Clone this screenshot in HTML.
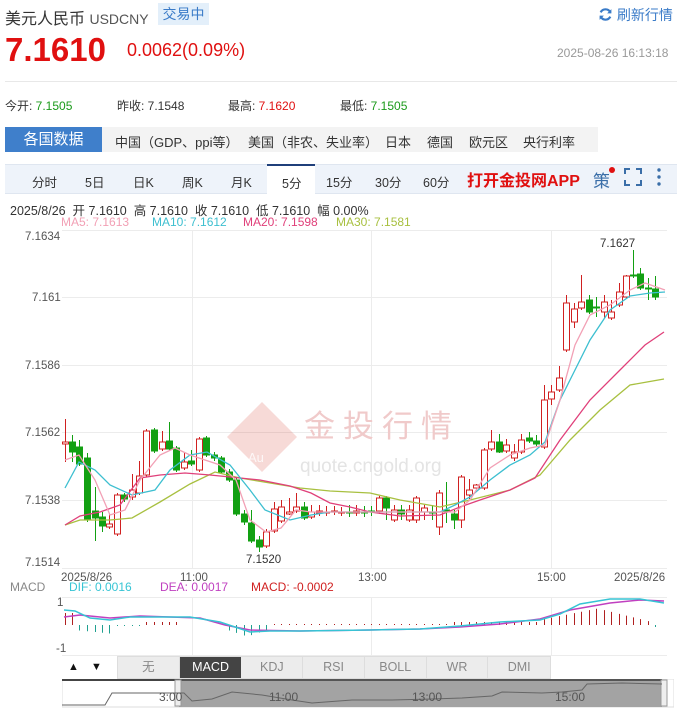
<!DOCTYPE html>
<html><head><meta charset="utf-8"><style>
*{margin:0;padding:0;box-sizing:border-box}
body{width:677px;height:710px;background:#fff;font-family:"Liberation Sans","Noto Sans CJK SC",sans-serif;position:relative;overflow:hidden;color:#333}
.a{position:absolute;white-space:nowrap}
</style></head><body>
<div class="a" style="left:5px;top:5px;font-size:16px;color:#333">美元人民币 <span style="font-size:14px;color:#555">USDCNY</span></div>
<div class="a" style="left:158px;top:3px;width:51px;height:22px;background:#e3effa;color:#3a7bc8;font-size:14px;line-height:22px;text-align:center">交易中</div>
<div class="a" style="left:598px;top:5px;font-size:14px;color:#3a7bc8"><svg width="15" height="15" viewBox="0 0 14 14" style="vertical-align:-2px"><path d="M11.5 5A5 5 0 0 0 2.5 5M2.5 9A5 5 0 0 0 11.5 9" stroke="#3a7bc8" stroke-width="2" fill="none"/><path d="M12.5 2v4h-4zM1.5 12V8h4z" fill="#3a7bc8"/></svg> 刷新行情</div>
<div class="a" style="left:5px;top:31px;font-size:33px;font-weight:bold;color:#e01010">7.1610</div>
<div class="a" style="left:127px;top:40px;font-size:18px;color:#e01010">0.0062(0.09%)</div>
<div class="a" style="left:557px;top:46px;font-size:12px;color:#999">2025-08-26 16:13:18</div>
<div class="a" style="left:5px;top:81px;width:672px;height:1px;background:#e8e8e8"></div>
<div class="a" style="left:5px;top:97px;font-size:12px;color:#333">今开: <span style="color:#1a9a1a">7.1505</span></div>
<div class="a" style="left:117px;top:97px;font-size:12px">昨收: 7.1548</div>
<div class="a" style="left:228px;top:97px;font-size:12px">最高: <span style="color:#e01010">7.1620</span></div>
<div class="a" style="left:340px;top:97px;font-size:12px">最低: <span style="color:#1a9a1a">7.1505</span></div>
<div class="a" style="left:5px;top:127px;width:97px;height:25px;background:#3f7fcb;color:#fff;font-size:15px;line-height:25px;text-align:center">各国数据</div>
<div class="a" style="left:102px;top:127px;width:496px;height:25px;background:#f3f3f3"></div>
<div class="a" style="top:132px;left:0;font-size:13px;color:#333">
<span class="a" style="left:115px">中国（GDP、ppi等）</span><span class="a" style="left:248px">美国（非农、失业率）</span><span class="a" style="left:385px">日本</span><span class="a" style="left:427px">德国</span><span class="a" style="left:469px">欧元区</span><span class="a" style="left:523px">央行利率</span></div>
<div class="a" style="left:5px;top:164px;width:672px;height:30px;background:#eef3fa;border-top:1px solid #dfe6f0;border-bottom:1px solid #dfe6f0"></div>
<div class="a" style="left:267px;top:164px;width:48px;height:31px;background:#fff;border-top:2px solid #1f3f7a"></div>
<div class="a" style="top:172px;left:0;font-size:12.5px;color:#333">
<span class="a" style="left:32px">分时</span><span class="a" style="left:85px">5日</span><span class="a" style="left:133px">日K</span><span class="a" style="left:182px">周K</span><span class="a" style="left:231px">月K</span><span class="a" style="left:282px;top:1px">5分</span><span class="a" style="left:326px">15分</span><span class="a" style="left:375px">30分</span><span class="a" style="left:423px">60分</span></div>
<div class="a" style="left:467px;top:167px;font-size:16px;font-weight:bold;color:#e01010">打开金投网APP</div>
<div class="a" style="left:593px;top:167px;font-size:17px;color:#3a6ea8">策</div>
<div class="a" style="left:609px;top:167px;width:6px;height:6px;border-radius:3px;background:#e01010"></div>
<svg class="a" style="left:624px;top:168px" width="18" height="18"><path d="M1 6V1h5M12 1h5v5M17 12v5h-5M6 17H1v-5" stroke="#3a6ea8" stroke-width="2" fill="none"/></svg>
<svg class="a" style="left:656px;top:167px" width="6" height="20"><circle cx="3" cy="3" r="1.7" fill="#3a6ea8"/><circle cx="3" cy="10" r="1.7" fill="#3a6ea8"/><circle cx="3" cy="17" r="1.7" fill="#3a6ea8"/></svg>
<div class="a" style="left:10px;top:200px;font-size:12.5px;color:#333">2025/8/26 &nbsp;开 7.1610 &nbsp;高 7.1610 &nbsp;收 7.1610 &nbsp;低 7.1610 &nbsp;幅 0.00%</div>
<div class="a" style="top:215px;left:0;font-size:12px">
<span class="a" style="left:61px;color:#f2a0b5">MA5: 7.1613</span><span class="a" style="left:152px;color:#3dbfd0">MA10: 7.1612</span><span class="a" style="left:243px;color:#e0407a">MA20: 7.1598</span><span class="a" style="left:336px;color:#a8c040">MA30: 7.1581</span></div>
<svg class="a" id="ch" style="left:0;top:0" width="677" height="710">
<g stroke="#ececec" stroke-width="1">
<line x1="62" y1="230.5" x2="667" y2="230.5"/><line x1="62" y1="297.5" x2="667" y2="297.5"/><line x1="62" y1="365.5" x2="667" y2="365.5"/><line x1="62" y1="432.5" x2="667" y2="432.5"/><line x1="62" y1="500.5" x2="667" y2="500.5"/><line x1="62" y1="568.5" x2="667" y2="568.5"/>
<line x1="192.5" y1="230" x2="192.5" y2="568"/><line x1="371.5" y1="230" x2="371.5" y2="568"/><line x1="551.5" y1="230" x2="551.5" y2="568"/>
<line x1="62" y1="597.5" x2="667" y2="597.5"/><line x1="62" y1="655.5" x2="667" y2="655.5"/>
<line x1="192.5" y1="597" x2="192.5" y2="655"/><line x1="371.5" y1="597" x2="371.5" y2="655"/><line x1="551.5" y1="597" x2="551.5" y2="655"/>
</g>
<g font-size="11.5" fill="#555" font-family="Liberation Sans,sans-serif">
<text x="25" y="240">7.1634</text><text x="32" y="301">7.161</text><text x="25" y="369">7.1586</text><text x="25" y="436">7.1562</text><text x="25" y="504">7.1538</text><text x="25" y="566">7.1514</text>
<text x="61" y="581">2025/8/26</text><text x="180" y="581">11:00</text><text x="358" y="581">13:00</text><text x="537" y="581">15:00</text><text x="614" y="581">2025/8/26</text>
<text x="246" y="563" fill="#333">7.1520</text><text x="600" y="247" fill="#333">7.1627</text>
<text x="57" y="606">1</text><text x="56" y="652">-1</text>
</g>
<g opacity="0.18" fill="#d03020"><path d="M262 402l35 35-35 35-35-35z"/></g>
<text x="304" y="437" font-size="31" fill="#f0caca" font-family="Noto Sans CJK SC,sans-serif" letter-spacing="8">金投行情</text>
<text x="300" y="472" font-size="19" fill="#e4e4e4" font-family="Liberation Sans,sans-serif">quote.cngold.org</text>
<text x="248" y="462" font-size="13" fill="#fff" opacity="0.8" font-family="Liberation Sans,sans-serif">Au</text>
<g id="cd"></g>
<g fill="none" stroke-width="1.3">
<polyline stroke="#a8c040" points="65,525 80,520 110,520 132,518 160,502 190,484 215,472 240,478 270,483 300,488 330,491 370,493 400,500 440,507 470,500 510,490 540,475 570,440 600,410 630,385 664,379"/>
<polyline stroke="#e0407a" points="65,525 80,516 100,512 120,505 140,478 160,475 185,473 210,475 240,478 260,480 290,486 311,493 330,503 350,507 370,512 400,516 440,515 460,507 480,500 510,490 535,478 560,440 590,400 620,370 645,345 664,332"/>
<polyline stroke="#3dbfd0" points="65,488 79,462 95,470 110,485 132,495 155,490 170,470 190,455 207,452 230,465 250,490 265,510 290,520 311,515 330,512 440,512 455,505 470,497 490,480 510,465 530,455 545,442 560,400 575,370 590,340 610,310 630,296 650,293 665,292"/>
<polyline stroke="#f2a0b5" points="65,460 79,455 95,480 110,515 125,510 140,480 160,455 175,448 190,455 205,460 220,465 236,480 250,520 266,532 281,528 296,510 311,512 455,512 470,500 490,468 510,455 530,448 545,445 560,400 575,345 590,315 610,305 630,290 645,283 665,290"/>
</g>
<g id="mh"></g>
<g fill="none" stroke-width="1.5">
<polyline stroke="#c040c0" points="64,617 80,615 110,618 140,616 170,617 200,618 225,625 250,630 300,631 370,630 420,629 460,627 500,624 540,619 570,610 610,603 640,600 664,601"/>
<polyline stroke="#36c4d4" points="64,610 75,611 90,618 110,620 130,617 160,617 190,617 220,622 250,632 270,631 300,631 370,630 420,629 460,626 500,622 540,620 560,614 580,604 610,599 640,599 664,603"/>
</g>
</svg>
<div class="a" style="top:580px;left:0;font-size:12px;color:#888">
<span class="a" style="left:10px">MACD</span><span class="a" style="left:69px;color:#36c4d4">DIF: 0.0016</span><span class="a" style="left:160px;color:#c040c0">DEA: 0.0017</span><span class="a" style="left:251px;color:#d02020">MACD: -0.0002</span></div>
<div class="a" style="left:62px;top:656px;width:48px;height:23px;font-size:11px;line-height:23px;color:#111"><span class="a" style="left:6px">▲</span><span class="a" style="left:29px">▼</span></div>
<div class="a" style="left:117px;top:656px;width:434px;height:23px;background:#ececec;border:1px solid #ddd;display:flex;font-size:12.5px;line-height:21px;color:#888;text-align:center">
<div style="width:62px;border-right:1px solid #ddd">无</div><div style="width:62px;background:#444;color:#fff">MACD</div><div style="width:62px;border-right:1px solid #ddd">KDJ</div><div style="width:62px;border-right:1px solid #ddd">RSI</div><div style="width:62px;border-right:1px solid #ddd">BOLL</div><div style="width:62px;border-right:1px solid #ddd">WR</div><div style="width:62px">DMI</div></div>
<svg class="a" style="left:62px;top:679px" width="612" height="29">
<rect x="0" y="0" width="612" height="28" fill="#fff" stroke="#ddd"/>
<rect x="0" y="0" width="118" height="2" fill="#444"/>
<rect x="117" y="0" width="483" height="28" fill="#a3a3a3"/>
<rect x="117" y="0" width="483" height="2" fill="#555"/>
<rect x="113" y="1" width="6" height="26" fill="#eee" stroke="#999"/><rect x="599" y="1" width="6" height="26" fill="#eee" stroke="#999"/>
<polyline fill="none" stroke="#666" points="0,26 25,26 30,26 43,26 50,14 100,14 122,14 130,22 150,20 170,13 200,16 230,21 250,24 290,21 330,21 370,20 400,19 430,17 440,13 480,14 500,13 520,11 525,5 560,4 600,5"/>
<g font-size="12" fill="#555" font-family="Liberation Sans,sans-serif"><text x="97" y="22">3:00</text><text x="207" y="22">11:00</text><text x="350" y="22">13:00</text><text x="493" y="22">15:00</text></g>
</svg>
<script>
var C=[[65,444,442,419,462],[72,442,452,435,462],[79,447,464,440,466],[87,458,520,453,522],[95,511,518,487,541],[102,517,526,512,532],[109,527,524,513,529],[117,534,495,493,536],[124,495,499,493,502],[132,497,490,474,500],[139,493,476,461,495],[146,475,431,429,477],[154,430,451,428,453],[162,449,442,431,451],[169,441,449,422,451],[176,448,470,446,472],[184,468,462,453,470],[191,461,464,450,466],[199,470,439,437,472],[206,438,455,436,457],[214,455,458,452,461],[221,458,472,456,474],[229,472,480,469,482],[236,480,514,478,516],[244,514,522,510,525],[251,523,541,510,543],[259,540,547,536,552],[266,546,532,529,548],[274,531,509,502,533],[281,521,507,500,523],[289,514,512,498,515],[296,511,507,493,513],[304,507,518,502,520],[311,517,512,505,519],[319,513,511,505,516],[326,513,512,506,516],[334,512,511,506,515],[341,513,512,507,516],[349,512,512,505,517],[356,513,511,505,516],[364,512,513,506,517],[371,511,512,506,516],[379,511,498,496,514],[386,498,508,496,520],[394,520,510,505,522],[401,510,514,505,520],[409,520,510,505,522],[416,520,498,496,523],[424,512,508,505,520],[432,512,512,505,520],[439,527,493,490,535],[446,510,510,482,523],[454,514,520,510,529],[461,520,477,475,528],[469,495,490,479,499],[476,488,485,484,490],[484,488,450,448,490],[491,449,442,430,451],[499,442,452,434,453],[506,451,445,439,453],[514,458,452,444,461],[521,452,440,434,454],[529,438,441,432,443],[536,441,444,435,447],[544,447,400,385,449],[551,399,392,385,405],[559,390,378,366,392],[566,350,303,295,352],[574,322,309,303,328],[581,308,302,275,310],[589,300,312,295,314],[596,307,307,297,317],[604,312,302,295,318],[611,318,312,300,320],[619,305,292,283,307],[626,297,276,275,299],[633,275,276,250,278],[640,274,288,268,290],[648,288,288,278,300],[655,289,297,276,300]];
var s='';C.forEach(function(c){var x=c[0],o=c[1],cl=c[2],h=c[3],l=c[4];var up=cl<o;var col=up?'#d02020':'#12a012';var t=Math.min(o,cl),b=Math.max(o,cl);if(b-t<1)b=t+1;
s+='<line x1="'+(x+.5)+'" y1="'+h+'" x2="'+(x+.5)+'" y2="'+l+'" stroke="'+col+'"/>';
s+='<rect x="'+(x-2.5)+'" y="'+t+'" width="6" height="'+(b-t)+'" fill="'+(up?'#fff':col)+'" stroke="'+col+'"/>';});
document.getElementById('cd').innerHTML=s;
var m='';C.forEach(function(c,i){var x=c[0]+.5;var v;
if(x<75)v=-12;else if(x<115)v=5+(x-75)/10;else if(x<140)v=1;else if(x<180)v=-3;else if(x<225)v=0;else if(x<270)v=4+ (x<250?(x-225)/3:(270-x)/3);else if(x<450)v=-1;else if(x<540)v=-3;else if(x<600)v=-5-(x-540)/5;else v=-16+(x-600)/4;
if(x>655)v=2;var col=v<0?'#b02020':'#20a090';m+='<line x1="'+x+'" y1="625" x2="'+x+'" y2="'+(625+v)+'" stroke="'+col+'"/>';});
document.getElementById('mh').innerHTML=m;
</script>
</body></html>
